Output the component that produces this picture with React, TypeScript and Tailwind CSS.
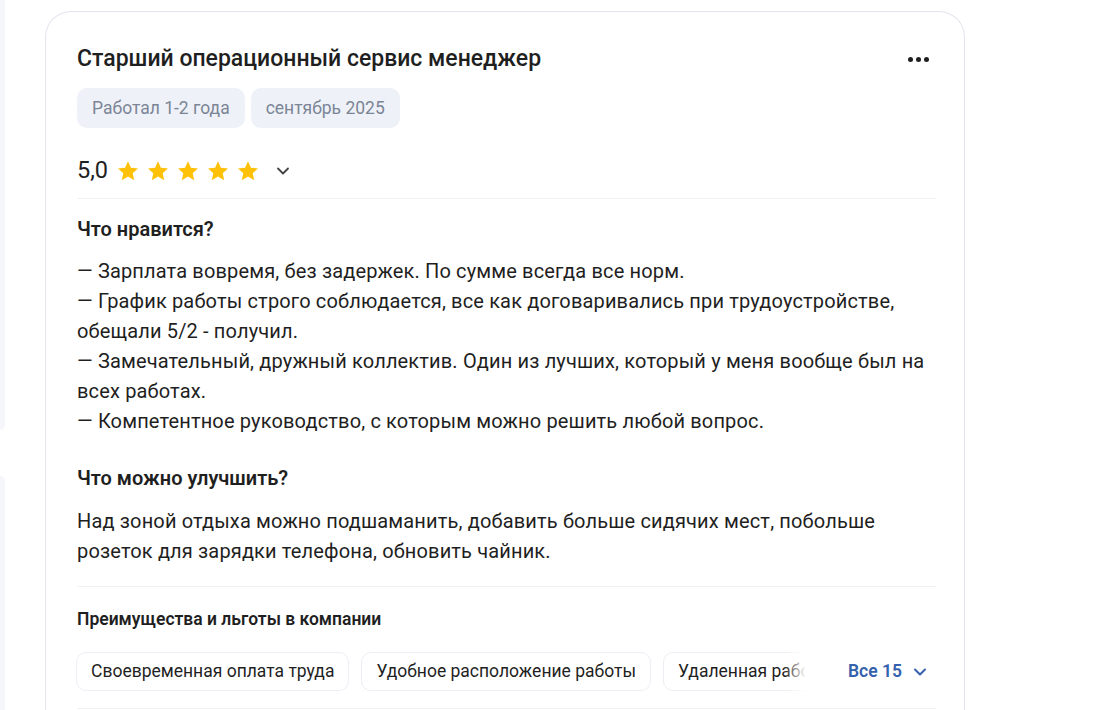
import { ChevronDown } from 'lucide-react'

const pros = [
  '— Зарплата вовремя, без задержек. По сумме всегда все норм.',
  '— График работы строго соблюдается, все как договаривались при трудоустройстве, обещали 5/2 - получил.',
  '— Замечательный, дружный коллектив. Один из лучших, который у меня вообще был на всех работах.',
  '— Компетентное руководство, с которым можно решить любой вопрос.',
]

const perks = ['Своевременная оплата труда', 'Удобное расположение работы', 'Удаленная работа']

function Star() {
  return (
    <svg width="24" height="24" viewBox="0 0 24 24" className="text-[#ffc107]">
      <path
        fill="currentColor"
        d="M12 2.2l2.9 6.5 7.1.7-5.3 4.8 1.5 7-6.2-3.6-6.2 3.6 1.5-7L2 9.4l7.1-.7z"
      />
    </svg>
  )
}

export default function App() {
  return (
    <div className="flex h-[710px] overflow-hidden bg-white font-['Roboto','Noto_Sans',sans-serif] text-[#1f1f1f]">
      {/* neighbour column edge */}
      <div className="flex w-[5px] shrink-0 flex-col gap-[46px]">
        <div className="h-[430px] rounded-br-[14px] bg-[#f5f6fa]" />
        <div className="flex-1 rounded-tr-[14px] bg-[#f5f6fa]" />
      </div>

      {/* Review card */}
      <div className="ml-[40px] mt-[11px] w-[920px] shrink-0 rounded-t-[26px] border border-b-0 border-[#e2e5ed] pl-[31px] pr-[28px] pt-[33px]">
        <div className="flex items-center justify-between">
          <h2 className="text-[23px] font-medium leading-[28px]">Старший операционный сервис менеджер</h2>
          <div className="mr-[7px] flex gap-[3px]">
            <span className="h-[5px] w-[5px] rounded-full bg-[#1f1f1f]" />
            <span className="h-[5px] w-[5px] rounded-full bg-[#1f1f1f]" />
            <span className="h-[5px] w-[5px] rounded-full bg-[#1f1f1f]" />
          </div>
        </div>

        <div className="mt-[15px] flex gap-[6px]">
          <span className="flex h-[40px] items-center rounded-[10px] bg-[#eef1f7] px-[15px] text-[17.5px] text-[#7b8596]">
            Работал 1-2 года
          </span>
          <span className="flex h-[40px] items-center rounded-[10px] bg-[#eef1f7] px-[15px] text-[17.5px] text-[#7b8596]">
            сентябрь 2025
          </span>
        </div>

        <div className="mt-[28px] flex h-[30px] items-center">
          <span className="text-[23.5px] leading-none">5,0</span>
          <div className="ml-[8px] flex gap-[6px]">
            <Star />
            <Star />
            <Star />
            <Star />
            <Star />
          </div>
          <ChevronDown size={20} strokeWidth={2.2} className="ml-[13px] text-[#444]" />
        </div>

        <div className="mt-[12px] h-px bg-[#eff1f5]" />

        <h3 className="mt-[17px] text-[20px] font-semibold leading-[26px]">Что нравится?</h3>
        <div className="mt-[14px] text-[20px] leading-[30px] tracking-[0.15px]">
          {pros.map((p) => (
            <p key={p}>{p}</p>
          ))}
        </div>

        <h3 className="mt-[29px] text-[20px] font-semibold leading-[26px]">Что можно улучшить?</h3>
        <p className="mt-[15px] text-[20px] leading-[30px] tracking-[0.15px]">
          Над зоной отдыха можно подшаманить, добавить больше сидячих мест, побольше розеток для зарядки телефона, обновить чайник.
        </p>

        <div className="mt-[20px] h-px bg-[#eff1f5]" />

        <h4 className="mt-[20px] text-[17.5px] font-semibold leading-[24px]">Преимущества и льготы в компании</h4>
        <div className="mt-[21px] flex items-center">
          <div className="relative flex w-[730px] -ml-px gap-[12px] overflow-hidden">
            {perks.map((p) => (
              <span
                key={p}
                className="flex h-[39px] shrink-0 items-center rounded-[10px] border border-[#eceef4] px-[14px] text-[17.5px]"
              >
                {p}
              </span>
            ))}
            <div className="absolute right-0 top-0 h-full w-[22px] bg-gradient-to-r from-white/0 to-white" />
          </div>
          <button className="ml-[42px] flex items-center gap-[8px] text-[17.5px] font-semibold text-[#3461ad]">
            Все 15
            <ChevronDown size={20} strokeWidth={2.4} />
          </button>
        </div>

        <div className="mt-[17px] h-px bg-[#eff1f5]" />
      </div>
    </div>
  )
}
